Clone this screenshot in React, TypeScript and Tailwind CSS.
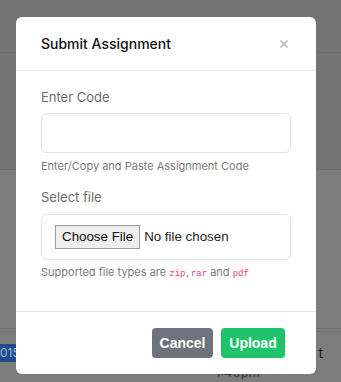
import { X } from "lucide-react";

export default function App() {
  return (
    <div className="relative h-[382px] w-[341px] overflow-hidden bg-[#7d7d7d] font-['Inter',sans-serif]">
      {/* Page behind the overlay */}
      <div className="h-[53px] border-b border-[#6f6f6f] bg-[#747474]" />
      <div className="h-[117px] border-b border-[#6f6f6f] bg-[#747474]" />
      <div className="h-[159px] border-b border-[#727272]" />
      <div className="h-[3px] border-b border-[#727272]" />
      <div className="flex items-center justify-between pt-[10px]">
        <div className="w-[20px] bg-[#1f4c8c] text-[12px] leading-[18px] text-[#9fb6d6]">015</div>
        <div className="pr-[18px] text-[14px] text-[#222]">t</div>
      </div>
      <div className="pl-[215px] text-[13px] text-[#333]">1:40pm</div>

      {/* Modal */}
      <div className="absolute left-[16px] top-[17px] flex h-[357px] w-[300px] flex-col rounded-[6px] bg-white">
        <div className="flex h-[54px] items-center justify-between border-b border-[#e5e7eb] pl-[25px] pr-[26px]">
          <h2 className="text-[14px] font-medium text-[#111]">Submit Assignment</h2>
          <X className="h-[12px] w-[12px] text-[#bdbdbd]" strokeWidth={3.5} />
        </div>

        <div className="flex flex-col border-b border-[#e5e7eb] px-[25px] pb-[29px] pt-[16px]">
          <label className="text-[13px] leading-[20px] text-[#6b6b6b]">Enter Code</label>
          <input
            type="text"
            className="mt-[6px] h-[40px] w-[250px] rounded-[6px] border border-[#e3e3e3] px-3 text-[13px] outline-none"
          />
          <p className="mt-[5px] text-[11px] leading-[16px] text-[#7a7a7a]">
            Enter/Copy and Paste Assignment Code
          </p>

          <label className="mt-[13px] text-[13px] leading-[20px] text-[#6b6b6b]">Select file</label>
          <div className="mt-[7px] flex h-[46px] w-[250px] items-center rounded-[6px] border border-[#e3e3e3] pl-[13px]">
            <span className="flex h-[24px] items-center border border-[#9a9a9a] bg-[#efefef] px-[6px] font-['Liberation_Sans',sans-serif] text-[13.33px] text-[#111]">
              Choose File
            </span>
            <span className="ml-[4px] font-['Liberation_Sans',sans-serif] text-[13.33px] text-[#222]">
              No file chosen
            </span>
          </div>
          <p className="mt-[4px] text-[11px] leading-[16px] text-[#7a7a7a]">
            Supported file types are{" "}
            <code className="font-['Liberation_Mono',monospace] text-[9px] text-[#e83e8c]">zip,rar</code> and{" "}
            <code className="font-['Liberation_Mono',monospace] text-[9px] text-[#e83e8c]">pdf</code>
          </p>
        </div>

        <div className="flex justify-end gap-[8px] pr-[31px] pt-[16px]">
          <button
            type="button"
            className="h-[30px] w-[61px] rounded-[4px] bg-[#6c737d] font-['Liberation_Sans',sans-serif] text-[14px] font-bold text-white"
          >
            Cancel
          </button>
          <button
            type="button"
            className="h-[30px] w-[64px] rounded-[4px] bg-[#1fc46a] font-['Liberation_Sans',sans-serif] text-[14px] font-bold text-white"
          >
            Upload
          </button>
        </div>
      </div>
    </div>
  );
}
